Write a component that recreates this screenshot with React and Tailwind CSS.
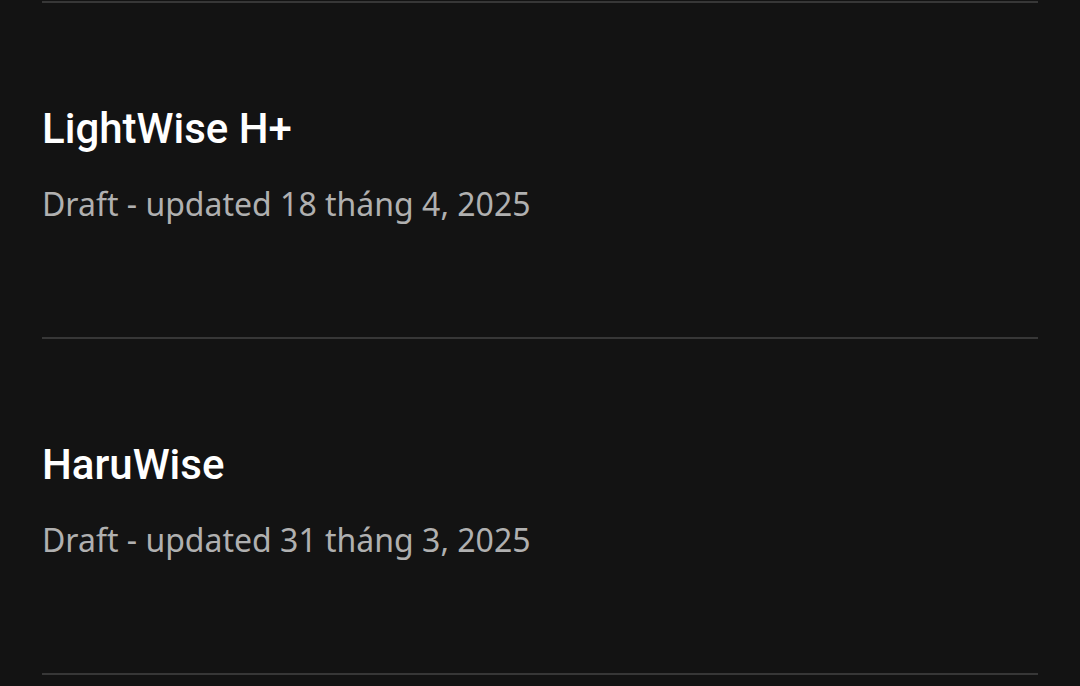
import React from "react";

const items = [
    { name: "LightWise H+", updated: "18 tháng 4, 2025" },
    { name: "HaruWise", updated: "31 tháng 3, 2025" },
];

export default function App() {
    return (
        <div className="min-h-screen bg-[#131313] overflow-hidden">
            <div className="px-[42px]">
                <div className="h-[2px] bg-[#373737] mt-px" />
                {items.map((item) => (
                    <div key={item.name}>
                        <div className="h-[334px] flex flex-col pt-[104px]">
                            <h3 className="text-[42px] leading-[44px] font-medium text-white font-['Roboto',sans-serif]">
                                {item.name}
                            </h3>
                            <p className="mt-[33px] text-[32px] leading-[40px] text-[#b0b0b0] font-['Noto_Sans',sans-serif]">
                                Draft - updated {item.updated}
                            </p>
                        </div>
                        <div className="h-[2px] bg-[#373737]" />
                    </div>
                ))}
            </div>
        </div>
    );
}
